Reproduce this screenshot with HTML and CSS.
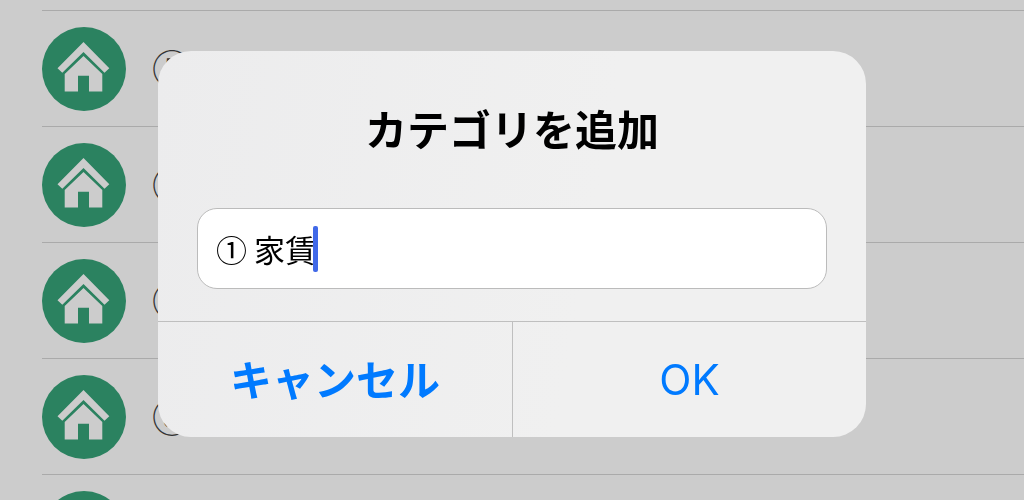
FILE: index.html
```html
<!DOCTYPE html>
<html lang="ja">
<head>
    <meta charset="UTF-8">
    <meta name="viewport" content="width=device-width, initial-scale=1.0">
    <title>カテゴリを追加</title>
    <link rel="stylesheet" href="styles.css">
</head>
<body>
    <svg class="sprite" aria-hidden="true">
        <symbol id="house" viewBox="0 0 84 84">
            <path d="M41.5 15 67.3 41.3 62.5 45.7 41.5 25 20.3 45.7 15.5 41.3Z"/>
            <path d="M41.5 29 60.3 47V64.6H47V48.7H36V64.6H22.7V47Z"/>
        </symbol>
    </svg>

    <ul class="category-list">
        <li class="category">
            <svg class="category-icon"><use href="#house"/></svg>
            <span class="category-name">⑤</span>
        </li>
        <li class="category">
            <svg class="category-icon"><use href="#house"/></svg>
            <span class="category-name">⑥</span>
        </li>
        <li class="category">
            <svg class="category-icon"><use href="#house"/></svg>
            <span class="category-name">⑦</span>
        </li>
        <li class="category">
            <svg class="category-icon"><use href="#house"/></svg>
            <span class="category-name">⑧</span>
        </li>
        <li class="category">
            <svg class="category-icon"><use href="#house"/></svg>
        </li>
    </ul>

    <div class="overlay">
        <form class="dialog" role="dialog" aria-labelledby="dialog-title">
            <label class="dialog-title" id="dialog-title" for="category-input">カテゴリを追加</label>
            <div class="field">
                <input type="text" id="category-input" class="field-input" value="① 家賃" autocomplete="off">
                <span class="caret"></span>
            </div>
            <div class="actions">
                <button type="button" class="btn btn-cancel">キャンセル</button>
                <button type="button" class="btn btn-ok">OK</button>
            </div>
        </form>
    </div>
</body>
</html>
```

FILE: styles.css
```css
* {
    box-sizing: border-box;
}

body {
    margin: 0;
    height: 100vh;
    overflow: hidden;
    background-color: #ccc;
    color: #000;
    font-family: "Noto Sans CJK JP", sans-serif;
}

.sprite {
    display: none;
}

/* list behind the dialog */
.category-list {
    list-style: none;
    height: 100%;
    overflow: hidden;
    margin: 0;
    padding: 10px 0 0 42px;
}

.category {
    display: flex;
    align-items: center;
    gap: 26px;
    padding: 16px 0 15px;
    border-top: 1px solid #aaa;
}

.category-icon {
    width: 84px;
    height: 84px;
    flex-shrink: 0;
    border-radius: 50%;
    background-color: #2b8260;
    fill: #ccc;
}

.category-name {
    font-size: 40px;
    line-height: 80px;
    height: 84px;
    color: #333;
}

/* dialog */
.overlay {
    position: fixed;
    inset: 0;
    display: flex;
    justify-content: center;
    align-items: center;
    padding: 0 16px 12px;
}

.dialog {
    display: flex;
    flex-direction: column;
    width: 100%;
    max-width: 708px;
    padding-top: 48px;
    border-radius: 33px;
    overflow: hidden;
    background: linear-gradient(100deg, #ececed, #f0f0f0 60%);
}

.dialog-title {
    font-size: 42px;
    line-height: 58px;
    font-weight: 700;
    text-align: center;
}

.field {
    position: relative;
    margin: 51px 39px 32px;
}

.field-input {
    display: block;
    width: 100%;
    height: 81px;
    padding: 0 18px;
    border: 1px solid #bbb;
    border-radius: 20px;
    background-color: #fff;
    color: #000;
    font-family: inherit;
    font-size: 31px;
    outline: none;
}

.caret {
    position: absolute;
    top: 18px;
    left: 116px;
    width: 5px;
    height: 46px;
    border-radius: 2px;
    background-color: #4169e8;
}

.actions {
    display: grid;
    grid-template-columns: 1fr 1fr;
    border-top: 1px solid #bfbfbf;
}

.btn {
    height: 115px;
    padding: 0;
    border: none;
    background: none;
    color: #007aff;
    font-size: 42px;
    cursor: pointer;
}

.btn-cancel {
    padding-bottom: 4px;
    font-family: inherit;
    font-weight: 700;
}

.btn-ok {
    border-left: 1px solid #bfbfbf;
    font-family: Inter, sans-serif;
    font-weight: 400;
}
```
